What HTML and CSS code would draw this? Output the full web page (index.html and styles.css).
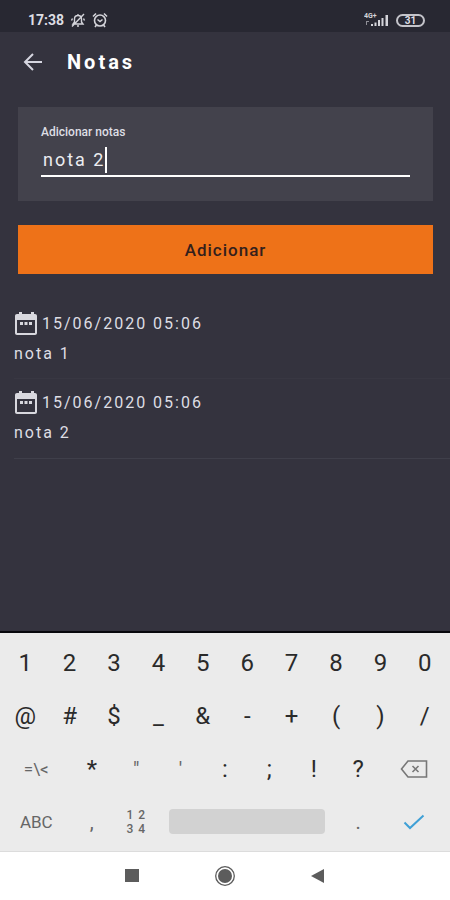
FILE: index.html
```html
<!DOCTYPE html>
<html lang="pt-BR">
<head>
    <meta charset="UTF-8">
    <meta name="viewport" content="width=device-width, initial-scale=1.0">
    <title>Notas</title>
    <link rel="stylesheet" href="styles.css">
</head>
<body>
    <div class="status-bar">
        <div class="status-left">
            <span class="clock">17:38</span>
            <svg width="16" height="16" viewBox="0 0 16 16" fill="none" stroke="#d4d4da" stroke-width="1.400">
                <path d="M3 12h10l-1.500-2V7c0-2-1.500-3.500-3.500-3.500S4.500 5 4.500 7v3zM7 14h2M8 3.500V2M2 14.500L14 2M1.500 8.500l1-2M14.500 8.500l-1-2"/>
            </svg>
            <svg width="16" height="16" viewBox="0 0 16 16" fill="none" stroke="#d4d4da" stroke-width="1.600">
                <circle cx="8" cy="8.500" r="5.500"/>
                <path d="M5.500 7.500L8 9.500l2.500-2M1 4.500l3-3M15 4.500l-3-3M4.500 13L3 15M11.500 13l1.500 2"/>
            </svg>
        </div>
        <div class="status-right">
            <svg width="26" height="14" viewBox="0 0 26 14" fill="#d4d4da">
                <text class="network" x="0" y="5">4G+</text>
                <path d="M7 11h2v2H7zM10.500 9.500h2V13h-2zM14 7h2v6h-2zM17.500 5h2v8h-2zM21.500 2h2.500v11h-2.500z"/>
                <path d="M2 8h3v1H3v3H2z" opacity=".6"/>
            </svg>
            <span class="battery">31</span>
        </div>
    </div>
    <header class="header">
        <button class="back" aria-label="Voltar">
            <svg width="20" height="18" viewBox="0 0 20 18" fill="none" stroke="#d6d6e0" stroke-width="2">
                <path d="M19 9H2M10 1L2 9l8 8"/>
            </svg>
        </button>
        <h1>Notas</h1>
    </header>
    <main class="content">
        <form class="note-form">
            <div class="card">
                <label for="note">Adicionar notas</label>
                <div class="field">
                    <input type="text" id="note" value="nota 2" size="6">
                    <span class="caret"></span>
                </div>
            </div>
            <button type="button" class="add-btn">Adicionar</button>
        </form>
        <ul class="notes">
            <li>
                <div class="date">
                    <svg width="24" height="24" viewBox="0 0 24 24" fill="#d8d8de">
                        <path fill-rule="evenodd" d="M5 1h3v2h9V1h3v2h1c1.200 0 2 .8 2 2v17c0 1.200-.8 2-2 2H3c-1.200 0-2-.8-2-2V5c0-1.200.8-2 2-2h2zM3 9v13h18V9zM6 11h3v3H6zM10.500 11h3v3h-3zM15 11h3v3h-3z"/>
                    </svg>
                    <span>15/06/2020 05:06</span>
                </div>
                <p>nota 1</p>
            </li>
            <li>
                <div class="date">
                    <svg width="24" height="24" viewBox="0 0 24 24" fill="#d8d8de">
                        <path fill-rule="evenodd" d="M5 1h3v2h9V1h3v2h1c1.200 0 2 .8 2 2v17c0 1.200-.8 2-2 2H3c-1.200 0-2-.8-2-2V5c0-1.200.8-2 2-2h2zM3 9v13h18V9zM6 11h3v3H6zM10.500 11h3v3h-3zM15 11h3v3h-3z"/>
                    </svg>
                    <span>15/06/2020 05:06</span>
                </div>
                <p>nota 2</p>
            </li>
        </ul>
    </main>
    <div class="keyboard">
        <button>1</button>
        <button>2</button>
        <button>3</button>
        <button>4</button>
        <button>5</button>
        <button>6</button>
        <button>7</button>
        <button>8</button>
        <button>9</button>
        <button>0</button>

        <button>@</button>
        <button>#</button>
        <button>$</button>
        <button>_</button>
        <button>&amp;</button>
        <button>-</button>
        <button>+</button>
        <button>(</button>
        <button>)</button>
        <button>/</button>

        <button class="wide small">=\&lt;</button>
        <button>*</button>
        <button class="light">"</button>
        <button class="light">'</button>
        <button>:</button>
        <button>;</button>
        <button>!</button>
        <button>?</button>
        <button class="wide" aria-label="Apagar">
            <svg width="28" height="18" viewBox="0 0 28 18" fill="none" stroke="#777" stroke-width="1.600">
                <path d="M8 1h18.500v16H8L1.500 9zM12.500 6l6 6M18.500 6l-6 6"/>
            </svg>
        </button>

        <button class="wide abc">ABC</button>
        <button class="light">,</button>
        <button class="numpad"><span>1 2</span><span>3 4</span></button>
        <button class="space" aria-label="Espaço"></button>
        <button class="light">.</button>
        <button class="wide" aria-label="Concluir">
            <svg width="22" height="16" viewBox="0 0 22 16" fill="none" stroke="#3fa0d6" stroke-width="2">
                <path d="M1.500 8.500l5.500 5.500L20.500 1.500"/>
            </svg>
        </button>
    </div>
    <nav class="nav-bar">
        <button aria-label="Recentes">
            <svg width="22" height="22" viewBox="0 0 22 22" fill="#5c5c5c">
                <rect x="4" y="4" width="14" height="13"/>
            </svg>
        </button>
        <button aria-label="Início">
            <svg width="22" height="22" viewBox="0 0 22 22" fill="#5c5c5c">
                <circle cx="11" cy="11" r="9.300" fill="none" stroke="#5c5c5c" stroke-width="1.300"/>
                <circle cx="11" cy="11" r="7"/>
            </svg>
        </button>
        <button aria-label="Voltar ao anterior">
            <svg width="22" height="22" viewBox="0 0 22 22" fill="#5c5c5c">
                <path d="M17 4v14L4 11z"/>
            </svg>
        </button>
    </nav>
</body>
</html>
```

FILE: styles.css
```css
* {
    box-sizing: border-box;
}

body {
    margin: 0;
    min-height: 100vh;
    display: flex;
    flex-direction: column;
    background: #34333e;
    color: #dedee4;
    font-family: Roboto, Arial, sans-serif;
}

button {
    padding: 0;
    border: 0;
    background: none;
    color: inherit;
    font-family: inherit;
}

svg {
    display: block;
}

.status-bar {
    display: flex;
    justify-content: space-between;
    align-items: center;
    height: 32px;
    padding: 8px 25px 0 28px;
    background: #282832;
}

.status-left, .status-right {
    display: flex;
    align-items: center;
    gap: 6px;
}

.clock {
    font-size: 14px;
    font-weight: 700;
}

.network {
    font-size: 7px;
    font-weight: 700;
}

.battery {
    width: 29px;
    height: 13px;
    border: 2px solid #c4c4ca;
    border-radius: 7px;
    font-size: 10px;
    font-weight: 700;
    line-height: 9px;
    text-align: center;
}

.header {
    display: flex;
    align-items: center;
    gap: 24px;
    height: 59px;
    padding: 0 23px;
}

.header h1 {
    margin: 0;
    color: #fff;
    font-size: 20px;
    font-weight: 700;
    letter-spacing: 3px;
}

.content {
    flex: 1;
    padding-top: 16px;
}

.note-form {
    padding: 0 17px 0 18px;
}

.card {
    height: 94px;
    padding: 16px 23px;
    background: #43424c;
}

.card label {
    display: block;
    font-size: 12px;
    font-weight: 500;
    line-height: 18px;
}

.field {
    display: flex;
    align-items: flex-end;
    height: 36px;
    padding-bottom: 2px;
    border-bottom: 2px solid #fff;
}

.field input {
    field-sizing: content;
    height: 28px;
    padding: 0 0 0 2px;
    border: 0;
    outline: 0;
    background: none;
    color: #ececf0;
    font-family: inherit;
    font-size: 18px;
    letter-spacing: 2px;
}

.caret {
    width: 2px;
    height: 26px;
    background: #fff;
}

.add-btn {
    width: 100%;
    height: 49px;
    margin-top: 24px;
    background: #ee7218;
    color: #33201c;
    font-size: 17px;
    font-weight: 500;
    letter-spacing: 1px;
}

.notes {
    margin: 26px 0 0;
    padding: 0 0 0 14px;
    list-style: none;
    font-size: 16px;
    letter-spacing: 2px;
}

.notes li {
    height: 79px;
    padding-top: 10px;
    border-bottom: 1px solid #383742;
}

.notes li:last-child {
    height: 80px;
    border-color: #3f3f4a;
}

.date {
    display: flex;
    align-items: center;
    gap: 4px;
    height: 26px;
}

.notes p {
    margin: 8px 0 0;
    line-height: 20px;
}

.keyboard {
    display: grid;
    grid-template-columns: repeat(20, 1fr);
    grid-auto-rows: 53px;
    padding: 3px;
    border-top: 2px solid #08080d;
    border-bottom: 1px solid #dcdcdc;
    background: #ebebeb;
    color: #2a2a2a;
}

.keyboard button {
    grid-column: span 2;
    display: flex;
    align-items: center;
    justify-content: center;
    font-size: 24px;
}

.keyboard .wide {
    grid-column: span 3;
}

.keyboard .light {
    color: #666;
    font-size: 20px;
}

.keyboard .small {
    color: #666;
    font-size: 17px;
}

.keyboard .abc {
    color: #666;
    font-size: 17px;
}

.keyboard .numpad {
    flex-direction: column;
    color: #666;
    font-size: 12px;
    font-weight: 500;
    letter-spacing: 1px;
    line-height: 14px;
}

.keyboard .space {
    grid-column: span 8;
    align-self: center;
    height: 25px;
    margin: 0 11px;
    border-radius: 4px;
    background: #d2d2d2;
}

.nav-bar {
    display: flex;
    justify-content: center;
    align-items: center;
    gap: 71px;
    height: 48px;
    background: #fff;
}
```
